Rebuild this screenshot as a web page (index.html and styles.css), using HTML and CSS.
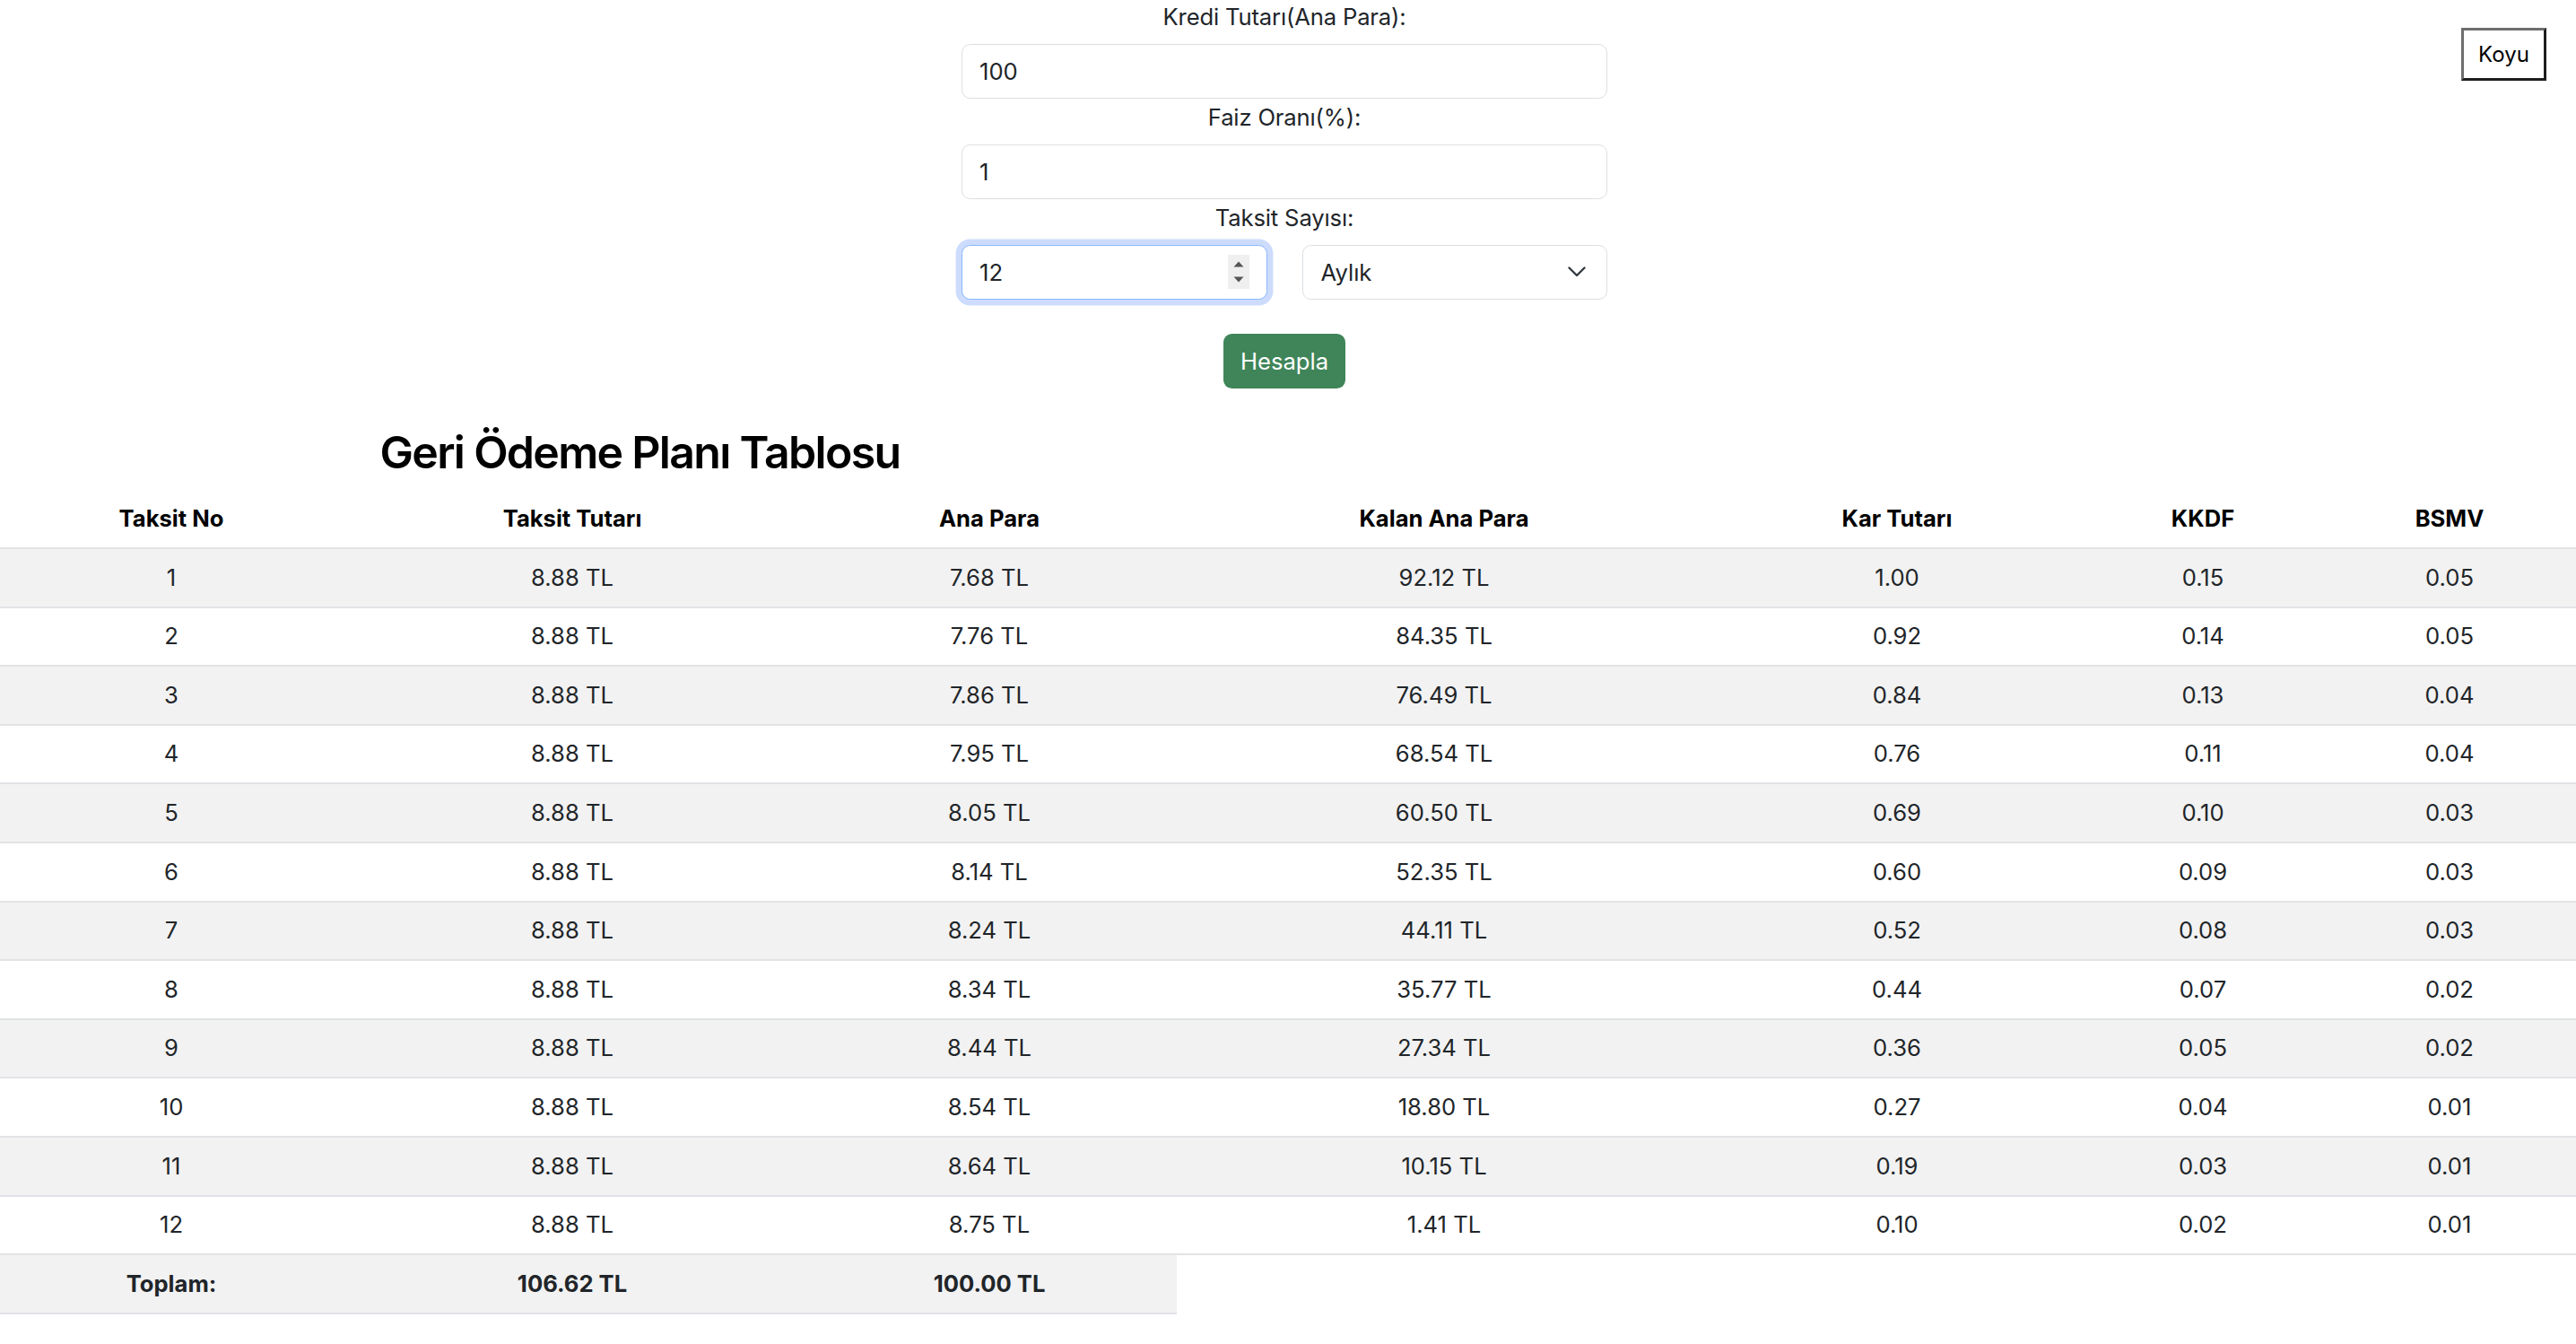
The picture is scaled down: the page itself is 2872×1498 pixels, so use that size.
FILE: index.html
```html
<!DOCTYPE html>
<html lang="tr">
<head>
<meta charset="utf-8">
<title>Kredi Hesaplama</title>
<link rel="stylesheet" href="styles.css">
</head>
<body>
<button class="theme-toggle" type="button">Koyu</button>

<div class="form-area">
  <form class="calc-form">
    <label class="field-label" for="amount">Kredi Tutarı(Ana Para):</label>
    <input class="field" id="amount" type="text" value="100">

    <label class="field-label" for="rate">Faiz Oranı(%):</label>
    <input class="field" id="rate" type="text" value="1">

    <label class="field-label" for="count">Taksit Sayısı:</label>
    <div class="field-row">
      <div class="field-wrap">
        <input class="field field-focus" id="count" type="text" value="12">
        <span class="spinner">
          <svg width="12" height="24" viewBox="0 0 12 24"><path d="M0.5 6.5 L6 0.5 L11.5 6.5 Z" fill="#555"/><path d="M0.5 17.5 L6 23.5 L11.5 17.5 Z" fill="#555"/></svg>
        </span>
      </div>
      <div class="field-wrap">
        <select class="field field-select" id="period">
          <option>Aylık</option>
        </select>
        <svg class="chevron" width="20" height="12" viewBox="0 0 20 12"><path d="M1.5 1.5 L10 10 L18.5 1.5" fill="none" stroke="#343a40" stroke-width="2.4" stroke-linecap="round" stroke-linejoin="round"/></svg>
      </div>
    </div>

    <div class="submit-row">
      <button class="btn-calc" type="button">Hesapla</button>
    </div>
  </form>
</div>

<div class="title-area">
  <h2 class="plan-title">Geri Ödeme Planı Tablosu</h2>
</div>

<table class="plan-table">
  <colgroup>
    <col class="c1"><col class="c2"><col class="c3"><col class="c4"><col class="c5"><col class="c6"><col class="c7">
  </colgroup>
  <thead>
    <tr><th>Taksit No</th><th>Taksit Tutarı</th><th>Ana Para</th><th>Kalan Ana Para</th><th>Kar Tutarı</th><th>KKDF</th><th>BSMV</th></tr>
  </thead>
  <tbody>
    <tr><td>1</td><td>8.88 TL</td><td>7.68 TL</td><td>92.12 TL</td><td>1.00</td><td>0.15</td><td>0.05</td></tr>
    <tr><td>2</td><td>8.88 TL</td><td>7.76 TL</td><td>84.35 TL</td><td>0.92</td><td>0.14</td><td>0.05</td></tr>
    <tr><td>3</td><td>8.88 TL</td><td>7.86 TL</td><td>76.49 TL</td><td>0.84</td><td>0.13</td><td>0.04</td></tr>
    <tr><td>4</td><td>8.88 TL</td><td>7.95 TL</td><td>68.54 TL</td><td>0.76</td><td>0.11</td><td>0.04</td></tr>
    <tr><td>5</td><td>8.88 TL</td><td>8.05 TL</td><td>60.50 TL</td><td>0.69</td><td>0.10</td><td>0.03</td></tr>
    <tr><td>6</td><td>8.88 TL</td><td>8.14 TL</td><td>52.35 TL</td><td>0.60</td><td>0.09</td><td>0.03</td></tr>
    <tr><td>7</td><td>8.88 TL</td><td>8.24 TL</td><td>44.11 TL</td><td>0.52</td><td>0.08</td><td>0.03</td></tr>
    <tr><td>8</td><td>8.88 TL</td><td>8.34 TL</td><td>35.77 TL</td><td>0.44</td><td>0.07</td><td>0.02</td></tr>
    <tr><td>9</td><td>8.88 TL</td><td>8.44 TL</td><td>27.34 TL</td><td>0.36</td><td>0.05</td><td>0.02</td></tr>
    <tr><td>10</td><td>8.88 TL</td><td>8.54 TL</td><td>18.80 TL</td><td>0.27</td><td>0.04</td><td>0.01</td></tr>
    <tr><td>11</td><td>8.88 TL</td><td>8.64 TL</td><td>10.15 TL</td><td>0.19</td><td>0.03</td><td>0.01</td></tr>
    <tr><td>12</td><td>8.88 TL</td><td>8.75 TL</td><td>1.41 TL</td><td>0.10</td><td>0.02</td><td>0.01</td></tr>
  </tbody>
  <tfoot>
    <tr><th>Toplam:</th><th>106.62 TL</th><th>100.00 TL</th></tr>
  </tfoot>
</table>
</body>
</html>
```

FILE: styles.css
```css
* { box-sizing: border-box; }

html, body {
  margin: 0;
  padding: 0;
  background: #fff;
}

body {
  font-family: "Inter", "Noto Sans", sans-serif;
  font-size: 25.6px;
  line-height: 38.4px;
  color: #212529;
  position: relative;
  min-height: 1498px;
}

/* theme toggle */
.theme-toggle {
  position: absolute;
  top: 31px;
  right: 33px;
  width: 95px;
  height: 59px;
  margin: 0;
  padding: 0;
  display: flex;
  align-items: center;
  justify-content: center;
  font-family: "Inter", "Noto Sans", sans-serif;
  font-size: 24px;
  color: #000;
  background: #fff;
  border-style: solid;
  border-width: 3px;
  border-color: #6e6e6e #1e1e1e #1e1e1e #6e6e6e;
}

/* form */
.form-area {
  display: flex;
  justify-content: center;
  padding-right: 8px;
}

.calc-form {
  width: 720px;
  margin-top: -2px;
}

.field-label {
  display: block;
  text-align: center;
  padding-top: 1.5px;
  margin-bottom: 11.3px;
  letter-spacing: -0.15px;
  color: #212529;
}

.field {
  display: block;
  width: 100%;
  height: 60.8px;
  padding: 0 19px;
  font-family: "Inter", "Noto Sans", sans-serif;
  font-size: 25.6px;
  color: #212529;
  background: #fff;
  border: 1.6px solid #dcdfe3;
  border-radius: 9.6px;
  outline: none;
}

.field-row {
  display: flex;
  gap: 39px;
}

.field-wrap {
  position: relative;
  flex: 1 1 0;
}

.field-focus {
  border-color: #86b7fe;
  box-shadow: 0 0 0 6.4px #cddcfd;
}

.spinner {
  position: absolute;
  top: 11px;
  right: 20px;
  width: 24px;
  height: 38px;
  background: #efefef;
  display: flex;
  align-items: center;
  justify-content: center;
}

.field-select {
  appearance: none;
  -webkit-appearance: none;
  padding-left: 20px;
}

.chevron {
  position: absolute;
  top: 24px;
  right: 24px;
}

.submit-row {
  display: flex;
  justify-content: center;
  margin-top: 38px;
}

.btn-calc {
  height: 61px;
  padding: 0 19px;
  font-family: "Inter", "Noto Sans", sans-serif;
  font-size: 25.6px;
  color: #fff;
  background: #3f8559;
  border: none;
  border-radius: 9.6px;
}

/* title */
.title-area {
  width: 1427px;
  margin-top: 41px;
  text-align: center;
}

.plan-title {
  margin: 0 0 10px;
  font-family: "Inter", "Noto Sans", sans-serif;
  font-size: 50px;
  line-height: 61.4px;
  font-weight: 600;
  letter-spacing: -1.7px;
  color: #000;
}

/* table */
.plan-table {
  width: 100%;
  border-collapse: collapse;
  table-layout: fixed;
}

.c1 { width: 382px; }
.c2 { width: 512px; }
.c3 { width: 418px; }
.c4 { width: 596px; }
.c5 { width: 414px; }
.c6 { width: 268px; }
.c7 { width: 282px; }

.plan-table th,
.plan-table td {
  height: 65.6px;
  padding: 12px 8px;
  text-align: center;
  vertical-align: middle;
  border-bottom: 2px solid #e1e3e6;
}

.plan-table th {
  font-weight: 700;
  color: #000;
}

.plan-table td {
  color: #212529;
}

.plan-table tbody tr:nth-child(odd) td {
  background: #f2f2f2;
}

.plan-table tfoot th {
  background: #f2f2f2;
  color: #212529;
}
```
